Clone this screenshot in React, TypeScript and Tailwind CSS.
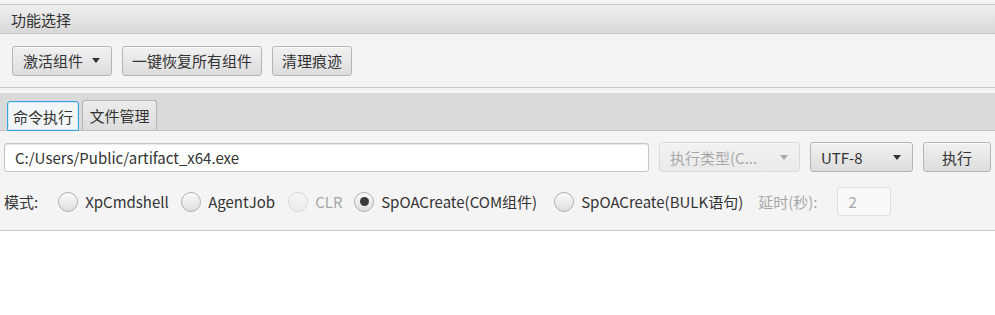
import React from 'react';

const FONT = "font-['Noto_Sans_CJK_SC','Noto_Sans',sans-serif]";

function Arrow({ faded }: { faded?: boolean }) {
  return (
    <svg width="8" height="5" viewBox="0 0 8 5" className={faded ? 'opacity-40' : ''}>
      <polygon points="0,0 8,0 4,5" fill="#333" />
    </svg>
  );
}

function Btn({ children, className = '' }: { children: React.ReactNode; className?: string }) {
  return (
    <div
      className={`h-[30px] flex items-center rounded-[3px] border border-[#b5b5b5] bg-linear-to-b from-[#f1f1f1] to-[#dddddd] shadow-[inset_0_1px_0_#fafafa] text-[#333] ${className}`}
    >
      {children}
    </div>
  );
}

function Radio({ label, w, checked, disabled }: { label: string; w: string; checked?: boolean; disabled?: boolean }) {
  return (
    <div className={`flex items-center gap-[7px] ${disabled ? 'opacity-40' : ''}`}>
      <div className="w-[20px] h-[20px] rounded-full border border-[#b0b0b0] bg-linear-to-b from-[#fbfbfb] to-[#dedede] flex items-center justify-center">
        {checked && <div className="w-[9px] h-[9px] rounded-full bg-[#3a3a3a]" />}
      </div>
      <span className={`text-[#333] whitespace-nowrap ${w}`}>{label}</span>
    </div>
  );
}

export default function App() {
  return (
    <div className={`w-[995px] h-[315px] bg-white text-[15px] leading-none ${FONT}`}>
      <div className="bg-[#f4f4f4] pt-[4px]">
        {/* 功能选择 */}
        <div className="h-[30px] border-y border-[#c6c6c6] bg-linear-to-b from-[#efefef] to-[#d8d8d8] flex items-center pl-[11px] text-[#333]">
          功能选择
        </div>
        <div className="h-[54px] flex items-center gap-[10px] px-[12px] border-b border-[#c8c8c8]">
          <Btn className="w-[100px] pl-[10px] pr-[11px] justify-between">
            <span>激活组件</span>
            <Arrow />
          </Btn>
          <Btn className="w-[140px] justify-center">一键恢复所有组件</Btn>
          <Btn className="w-[80px] justify-center">清理痕迹</Btn>
        </div>

        {/* tabs */}
        <div className="mt-[5px] h-[38px] bg-[#dadada] border-b border-[#c2c2c2] flex items-end pl-[7px] gap-[3px]">
          <div className="h-[30px] w-[72px] -mb-px rounded-t-[3px] border border-[#39a1dc] bg-[#f3f6f8] shadow-[inset_0_0_0_1px_#cfe9f7] flex items-center justify-center text-[#333]">
            命令执行
          </div>
          <div className="h-[30px] w-[75px] rounded-t-[3px] border border-b-0 border-[#b3b3b3] bg-linear-to-b from-[#ececec] to-[#dcdcdc] flex items-center justify-center text-[#333]">
            文件管理
          </div>
        </div>

        <div className="border-b border-[#c6c6c6] pt-[11px] pb-[14px] px-[4px]">
          <div className="flex items-center gap-[10px]">
            <div className="h-[29px] flex-1 rounded-[3px] border border-[#c4c4c4] bg-white shadow-[inset_0_1px_1px_#e8e8e8] flex items-center pl-[10px] text-[#333]">
              C:/Users/Public/artifact_x64.exe
            </div>
            <Btn className="w-[141px] pl-[10px] pr-[11px] justify-between opacity-40">
              <span>执行类型(C...</span>
              <Arrow />
            </Btn>
            <Btn className="w-[103px] pl-[10px] pr-[11px] justify-between">
              <span>UTF-8</span>
              <Arrow />
            </Btn>
            <Btn className="w-[68px] justify-center">执行</Btn>
          </div>

          <div className="mt-[15px] flex items-center">
            <span className="text-[#333] mr-[20px]">模式:</span>
            <div className="flex items-center gap-[11px]">
              <Radio label="XpCmdshell" w="w-[85px]" />
              <Radio label="AgentJob" w="w-[69px]" />
              <Radio label="CLR" w="w-[28px]" disabled />
              <Radio label="SpOACreate(COM组件)" w="w-[162px]" checked />
              <Radio label="SpOACreate(BULK语句)" w="w-[166px]" />
            </div>
            <span className="ml-[11px] text-[#333] opacity-40">延时(秒):</span>
            <div className="ml-[20px] h-[29px] w-[54px] rounded-[3px] border border-[#c4c4c4] bg-white opacity-40 flex items-center pl-[10px] text-[#333]">
              2
            </div>
          </div>
        </div>
      </div>
    </div>
  );
}
